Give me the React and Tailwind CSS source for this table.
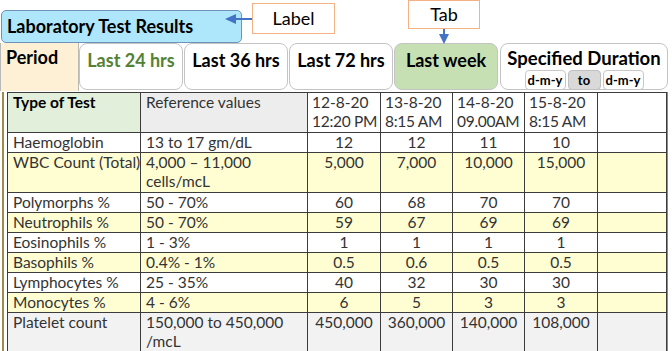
const rows = [
  { name: 'Haemoglobin', ref: ['13 to 17 gm/dL'], vals: ['12', '12', '11', '10'], tone: 'white' },
  { name: 'WBC Count (Total)', ref: ['4,000 – 11,000', 'cells/mcL'], vals: ['5,000', '7,000', '10,000', '15,000'], tone: 'yellow', tall: true },
  { name: 'Polymorphs %', ref: ['50 - 70%'], vals: ['60', '68', '70', '70'], tone: 'white' },
  { name: 'Neutrophils %', ref: ['50 - 70%'], vals: ['59', '67', '69', '69'], tone: 'yellow' },
  { name: 'Eosinophils %', ref: ['1 - 3%'], vals: ['1', '1', '1', '1'], tone: 'white' },
  { name: 'Basophils %', ref: ['0.4% - 1%'], vals: ['0.5', '0.6', '0.5', '0.5'], tone: 'yellow' },
  { name: 'Lymphocytes %', ref: ['25 - 35%'], vals: ['40', '32', '30', '30'], tone: 'white' },
  { name: 'Monocytes %', ref: ['4 - 6%'], vals: ['6', '5', '3', '3'], tone: 'yellow' },
  { name: 'Platelet count', ref: ['150,000 to 450,000', '/mcL'], vals: ['450,000', '360,000', '140,000', '108,000'], tone: 'gray', tall: true },
]

const dates = [
  ['12-8-20', '12:20 PM'],
  ['13-8-20', '8:15 AM'],
  ['14-8-20', '09.00AM'],
  ['15-8-20', '8:15 AM'],
]

const toneBg = {
  white: 'bg-white',
  yellow: 'bg-[#fffdd2]',
  gray: 'bg-[#f2f2f2]',
}

const cell = 'border border-[#3c3c3c] align-top whitespace-nowrap overflow-hidden'

function Tab({ children, active, green }) {
  return (
    <div
      className={`flex h-[47px] w-[104px] flex-col items-center rounded-[8px] border border-[#c4c4c4] pt-[3px] text-[18px] font-bold ${
        active ? 'bg-[#c6e0b4]' : 'bg-white'
      } ${green ? 'text-[#548235]' : 'text-black'}`}
    >
      {children}
    </div>
  )
}

export default function App() {
  return (
    <div className="relative h-[351px] w-[672px] overflow-hidden bg-white font-['Lato',sans-serif] text-black">
      {/* callouts */}
      <div className="absolute left-[252px] top-[3px] flex h-[31px] w-[83px] items-center justify-center border border-[#f4b183] bg-white text-[18px]">
        Label
      </div>
      <div className="absolute left-[408px] top-0 flex h-[29px] w-[72px] items-center justify-center border border-[#f4b183] bg-white text-[18px]">
        Tab
      </div>
      <svg className="absolute left-0 top-0" width="672" height="50">
        <line x1="252" y1="19" x2="234" y2="19" stroke="#4472c4" strokeWidth="2" />
        <polygon points="225,19 236,14 236,24" fill="#4472c4" />
        <line x1="444" y1="29" x2="444" y2="36" stroke="#4472c4" strokeWidth="2" />
        <polygon points="444,44 439,34 449,34" fill="#4472c4" />
      </svg>

      <div className="pl-[1px] pt-[10px]">
        <div className="flex h-[33px] w-[241px] items-center rounded-[5px] border border-[#6f93b8] bg-[#aee7fb] pl-[5px] text-[18px] font-bold">
          Laboratory Test Results
        </div>
      </div>

      <div className="flex items-start">
        <div className="h-[48px] w-[79px] border-x border-[#b9b9b9] bg-[#fdf0d5] pl-[5px] pt-[1px] text-[18px] font-bold">
          Period
        </div>
        <div className="flex gap-[1px]">
          <Tab green>Last 24 hrs</Tab>
          <Tab>Last 36 hrs</Tab>
          <Tab>Last 72 hrs</Tab>
          <Tab active>Last week</Tab>
          <div className="ml-[1px] flex h-[47px] w-[168px] flex-col items-center rounded-[8px] border border-[#c4c4c4] bg-white pt-[4px]">
            <div className="text-[18.5px] font-bold leading-[21px]">Specified Duration</div>
            <div className="mt-[1px] flex gap-[2px] text-[13px] font-bold">
              <span className="flex h-[20px] w-[41px] items-start justify-center rounded-[4px] border border-[#c8c8c8] bg-white leading-[18px]">d-m-y</span>
              <span className="flex h-[20px] w-[33px] items-start justify-center rounded-[4px] border border-[#c0c0c0] bg-[#d9d9d9] leading-[18px]">to</span>
              <span className="flex h-[20px] w-[41px] items-start justify-center rounded-[4px] border border-[#c8c8c8] bg-white leading-[18px]">d-m-y</span>
            </div>
          </div>
        </div>
      </div>

      <div className="ml-[2px] mt-[1px] w-[666px] border-2 border-t-0 border-[#a08b4c] pl-[3px]">
        <table className="w-[659px] table-fixed border-collapse text-[15.5px] leading-[19px] text-[#333333]">
          <colgroup>
            <col className="w-[133px]" />
            <col className="w-[167px]" />
            <col className="w-[73px]" />
            <col className="w-[72px]" />
            <col className="w-[72px]" />
            <col className="w-[73px]" />
            <col className="w-[69px]" />
          </colgroup>
          <tbody>
            <tr className="h-[40px]">
              <td className={`${cell} bg-[#e2efda] pl-[5px] font-bold text-black`}>Type of Test</td>
              <td className={`${cell} bg-[#ededed] pl-[5px]`}>Reference values</td>
              {dates.map((d) => (
                <td key={d[0]} className={`${cell} bg-white pl-[4px]`}>
                  {d[0]}
                  <br />
                  <span className="tracking-[-0.3px]">{d[1]}</span>
                </td>
              ))}
              <td className={`${cell} bg-white`} />
            </tr>
            {rows.map((r) => (
              <tr key={r.name} className={`${r.tall ? (r.tone === 'gray' ? 'h-[36px]' : 'h-[40px]') : 'h-[20px]'} ${toneBg[r.tone]}`}>
                <td className={`${cell} pl-[5px]`}>{r.name}</td>
                <td className={`${cell} pl-[5px]`}>
                  {r.ref.map((line, i) => (
                    <div key={i}>{line}</div>
                  ))}
                </td>
                {r.vals.map((v, i) => (
                  <td key={i} className={`${cell} text-center`}>{v}</td>
                ))}
                <td className={cell} />
              </tr>
            ))}
          </tbody>
        </table>
      </div>
    </div>
  )
}
